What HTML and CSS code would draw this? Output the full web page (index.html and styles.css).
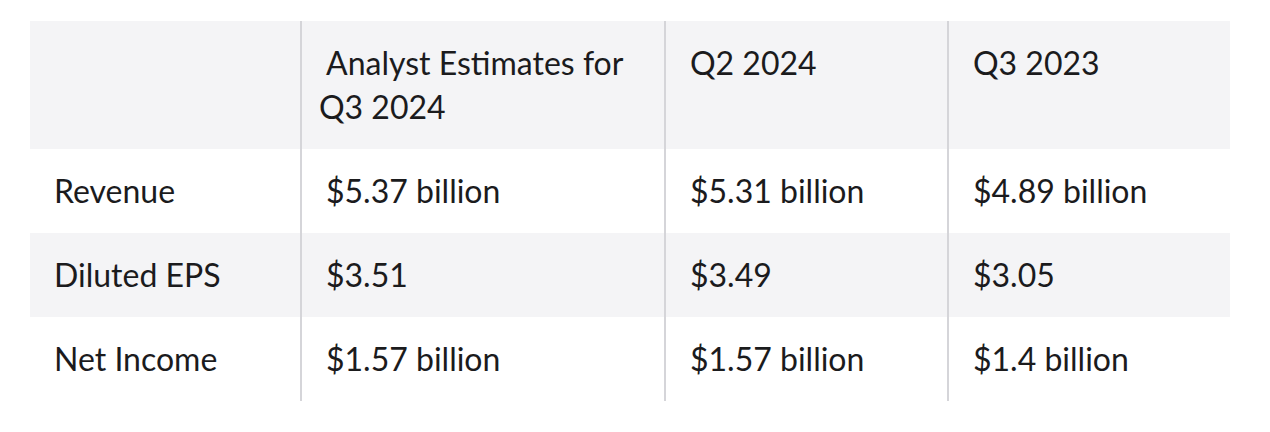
FILE: index.html
```html
<!DOCTYPE html>
<html lang="en">
<head>
<meta charset="utf-8">
<title>Earnings table</title>
<link rel="stylesheet" href="styles.css">
</head>
<body>
<div class="wrap">
  <table class="earn">
    <colgroup>
      <col class="c1"><col class="c2"><col class="c3"><col class="c4">
    </colgroup>
    <thead>
      <tr>
        <th></th>
        <th class="first-head">&nbsp;Analyst Estimates for Q3 2024</th>
        <th>Q2 2024</th>
        <th>Q3 2023</th>
      </tr>
    </thead>
    <tbody>
      <tr>
        <td>Revenue</td>
        <td>$5.37 billion</td>
        <td>$5.31 billion</td>
        <td>$4.89 billion</td>
      </tr>
      <tr class="alt">
        <td>Diluted EPS</td>
        <td>$3.51</td>
        <td>$3.49</td>
        <td>$3.05</td>
      </tr>
      <tr>
        <td>Net Income</td>
        <td>$1.57 billion</td>
        <td>$1.57 billion</td>
        <td>$1.4 billion</td>
      </tr>
    </tbody>
  </table>
</div>
</body>
</html>
```

FILE: styles.css
```css
html, body {
  margin: 0;
  padding: 0;
  background: #ffffff;
}

.wrap {
  padding: 21px 40px 0 30px;
}

.earn {
  width: 1200px;
  border-collapse: collapse;
  table-layout: fixed;
  font-family: "Lato", "Liberation Sans", sans-serif;
  font-size: 32px;
  line-height: 44px;
  color: #1b1b1d;
}

.c1 { width: 271px; }
.c2 { width: 364px; }
.c3 { width: 283px; }
.c4 { width: 282px; }

.earn th,
.earn td {
  text-align: left;
  vertical-align: top;
  font-weight: 400;
  padding: 20px 16px 20px 24px;
}

.earn th + th,
.earn td + td {
  border-left: 2px solid #d5d5d9;
}

.earn thead tr {
  background: #f4f4f6;
}

.earn th.first-head {
  padding-left: 17px;
}

.earn tr.alt {
  background: #f4f4f6;
}
```
